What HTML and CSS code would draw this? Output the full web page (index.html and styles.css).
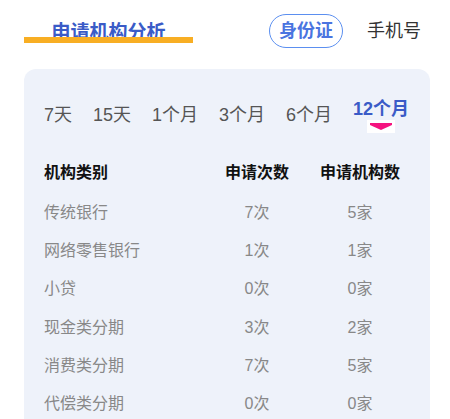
FILE: index.html
```html
<!DOCTYPE html>
<html lang="zh">
<head>
<meta charset="utf-8">
<link rel="stylesheet" href="styles.css">
</head>
<body>
<div class="top">
  <div class="title">申请机构分析</div>
  <div class="pill">身份证</div>
  <div class="phone">手机号</div>
</div>
<div class="card">
  <div class="tabs">
    <div class="tab">7天</div>
    <div class="tab">15天</div>
    <div class="tab">1个月</div>
    <div class="tab">3个月</div>
    <div class="tab">6个月</div>
    <div class="tab active">
      <span class="tab-text">12个月</span>
      <span class="indicator"><svg width="28" height="13" viewBox="0 0 28 13"><rect width="28" height="13" fill="#fff"/><polygon points="3,3 25,3 25,5 14,10 3,5" fill="#f5137f"/></svg></span>
    </div>
  </div>
  <div class="table">
    <div class="row head"><span>机构类别</span><span class="c">申请次数</span><span class="c">申请机构数</span></div>
    <div class="row"><span>传统银行</span><span class="c">7次</span><span class="c">5家</span></div>
    <div class="row"><span>网络零售银行</span><span class="c">1次</span><span class="c">1家</span></div>
    <div class="row"><span>小贷</span><span class="c">0次</span><span class="c">0家</span></div>
    <div class="row"><span>现金类分期</span><span class="c">3次</span><span class="c">2家</span></div>
    <div class="row"><span>消费类分期</span><span class="c">7次</span><span class="c">5家</span></div>
    <div class="row"><span>代偿类分期</span><span class="c">0次</span><span class="c">0家</span></div>
  </div>
</div>
</body>
</html>
```
FILE: styles.css
```css
html, body {
  margin: 0;
  padding: 0;
  background: #fff;
  font-family: "Liberation Sans", "Noto Sans CJK SC", sans-serif;
}
body {
  height: 419px;
  overflow: hidden;
}
.top {
  display: flex;
  align-items: center;
  padding: 14px 29px 0 0;
  height: 34px;
}
.title {
  position: relative;
  box-sizing: border-box;
  width: 169px;
  margin-left: 24px;
  padding-top: 3px;
  text-align: center;
  font-size: 19px;
  font-weight: bold;
  line-height: 31px;
  height: 34px;
  color: #3a5bc7;
}
.title::after {
  content: "";
  position: absolute;
  left: 0;
  top: 23px;
  width: 169px;
  height: 6px;
  background: #f8ae23;
}
.pill {
  margin-left: auto;
  box-sizing: border-box;
  width: 74px;
  height: 34px;
  border: 1px solid #5b8ff0;
  border-radius: 17px;
  text-align: center;
  line-height: 32px;
  font-size: 18px;
  font-weight: bold;
  color: #4a74e0;
}
.phone {
  margin-left: 24px;
  font-size: 18px;
  color: #333;
  line-height: 34px;
}
.card {
  margin: 21px 20px 0 24px;
  background: #eef2fa;
  border-radius: 12px;
  padding: 28px 0 0 20px;
  height: 345px;
}
.tabs {
  display: flex;
  align-items: flex-start;
  gap: 21px;
  margin-bottom: 17px;
}
.tab {
  font-size: 18px;
  line-height: 24px;
  margin-top: 6px;
  color: #555;
}
.tab.active {
  margin-top: 0;
  display: flex;
  flex-direction: column;
  align-items: center;
  color: #3a5bc7;
  font-weight: bold;
}
.indicator {
  display: block;
  height: 13px;
  margin-top: -1px;
}
.indicator svg { display: block; }
.row {
  display: grid;
  grid-template-columns: 163px 100px 106px;
  height: 38.2px;
  align-items: center;
  font-size: 16px;
  color: #888;
}
.row.head {
  height: 42px;
  color: #111;
  font-weight: bold;
}
.c { text-align: center; }
```
